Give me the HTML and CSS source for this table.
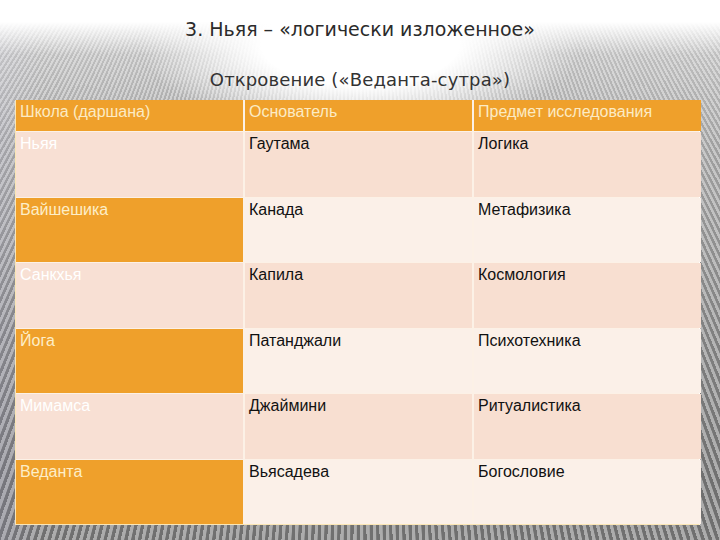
FILE: index.html
```html
<!DOCTYPE html>
<html lang="ru">
<head>
<meta charset="utf-8">
<title>Ньяя</title>
<link rel="stylesheet" href="styles.css">
</head>
<body>
<div class="slide">
  <header class="head">
    <h1 class="title">3. Ньяя – «логически изложенное»</h1>
    <h2 class="subtitle">Откровение («Веданта-сутра»)</h2>
  </header>
  <div class="table">
    <div class="cell th">Школа (даршана)</div>
    <div class="cell th">Основатель</div>
    <div class="cell th">Предмет исследования</div>

    <div class="cell first odd">Ньяя</div>
    <div class="cell odd">Гаутама</div>
    <div class="cell odd">Логика</div>

    <div class="cell first even">Вайшешика</div>
    <div class="cell even">Канада</div>
    <div class="cell even">Метафизика</div>

    <div class="cell first odd">Санкхья</div>
    <div class="cell odd">Капила</div>
    <div class="cell odd">Космология</div>

    <div class="cell first even">Йога</div>
    <div class="cell even">Патанджали</div>
    <div class="cell even">Психотехника</div>

    <div class="cell first odd">Мимамса</div>
    <div class="cell odd">Джаймини</div>
    <div class="cell odd">Ритуалистика</div>

    <div class="cell first even">Веданта</div>
    <div class="cell even">Вьясадева</div>
    <div class="cell even">Богословие</div>
  </div>
</div>
</body>
</html>
```

FILE: styles.css
```css
html, body {
  margin: 0;
  padding: 0;
}
body {
  width: 720px;
  height: 540px;
  overflow: hidden;
  background:
    radial-gradient(ellipse 220px 90px at 50% 45px, #ffffff 45%, rgba(255,255,255,0) 100%),
    linear-gradient(to bottom, #ffffff 0px, #ffffff 22px, rgba(255,255,255,0.55) 55px, rgba(255,255,255,0.35) 140px, rgba(255,255,255,0.12) 330px, rgba(255,255,255,0) 480px),
    linear-gradient(to right, rgba(160,160,210,0.14) 0px, rgba(160,160,210,0) 40px),
    repeating-conic-gradient(from 180deg at 50% -500px, #707070 0deg 0.16deg, #acacac 0.2deg 0.36deg);
}
.slide {
  font-family: "Liberation Sans", Arial, sans-serif;
}
.head {
  height: 100px;
  display: flex;
  flex-direction: column;
  align-items: center;
}
.title {
  margin: 17px 0 0 0;
  font-family: "DejaVu Sans", "Liberation Sans", sans-serif;
  font-weight: normal;
  font-size: 19px;
  line-height: 24px;
  color: #2b2b2b;
}
.subtitle {
  margin: 27px 0 0 0;
  font-family: "DejaVu Sans", "Liberation Sans", sans-serif;
  font-weight: normal;
  font-size: 18px;
  letter-spacing: 0.15px;
  line-height: 24px;
  color: #333333;
}
.table {
  margin-left: 15px;
  width: 685px;
  height: 425px;
  box-sizing: border-box;
  display: grid;
  grid-template-columns: 227px 227px 227px;
  grid-template-rows: 31px repeat(6, 1fr);
  column-gap: 2px;
  row-gap: 1px;
  background: #fcf1e6;
  border-left: 1px solid #fbe6b4;
  border-bottom: 1px solid #fbe6b4;
  border-right: 1px solid #ffffff;
}
.cell {
  padding: 3px 4px;
  font-size: 16px;
  line-height: 18px;
  color: #111111;
}
.th {
  background: #efa02b;
  color: #fcebc4;
}
.odd {
  background: #f8dfd1;
}
.even {
  background: #fbf0e8;
}
.first.odd {
  background: #f8e0d4;
  color: #ffffff;
}
.first.even {
  background: #efa02b;
  color: #fdeec8;
}
```
